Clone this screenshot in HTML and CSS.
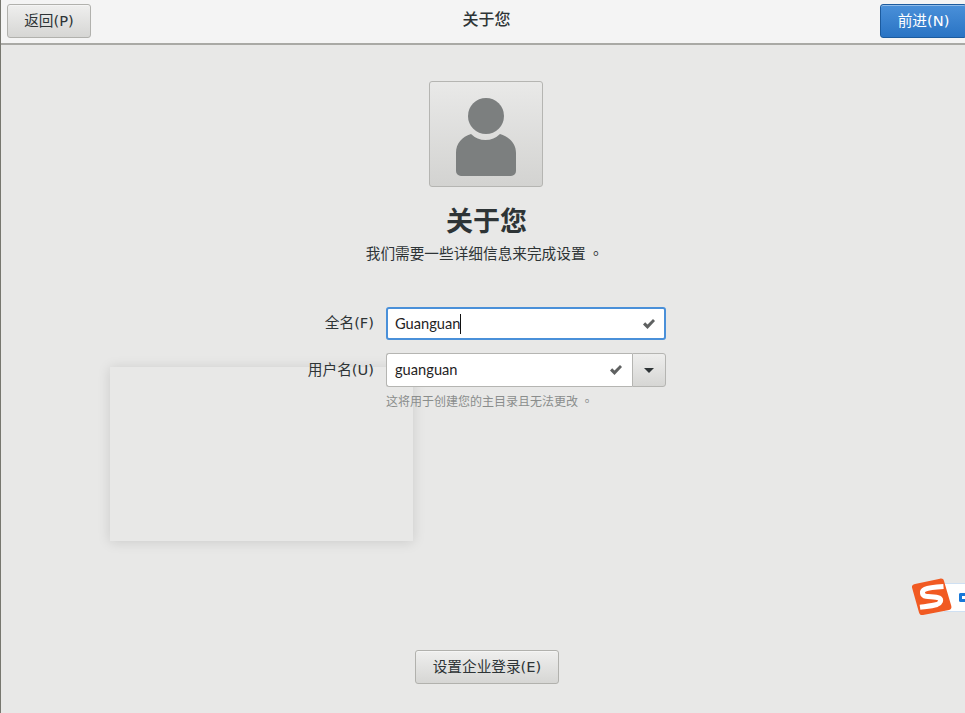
FILE: index.html
```html
<!DOCTYPE html>
<html lang="zh-CN">
<head>
<meta charset="utf-8">
<title>关于您</title>
<link rel="stylesheet" href="styles.css">
</head>
<body>
<div class="page">
  <header class="header">
    <button class="btn back">返回(P)</button>
    <div class="header-title">关于您</div>
    <button class="btn next">前进(N)</button>
  </header>
  <main class="main">
    <div class="ghost"></div>
    <div class="avatar">
      <svg width="112" height="104" viewBox="1 1 112 104">
        <circle cx="57" cy="35" r="18" fill="#7c7f7f"/>
        <path d="M27 72C27 62 33 56 42 53A20.5 20.5 0 0 0 71 53C80 56 87 62 87 72V90A5 5 0 0 1 82 95H32A5 5 0 0 1 27 90Z" fill="#7c7f7f"/>
      </svg>
    </div>
    <h1 class="title">关于您</h1>
    <p class="subtitle">我们需要一些详细信息来完成设置<span class="stop" lang="zh-TW">。</span></p>
    <div class="form">
      <label class="label">全名(F)</label>
      <div class="field focused">
        <span class="value">Guanguan</span><span class="caret"></span>
        <svg class="check" width="12" height="10" viewBox="0 0 12 10"><path d="M0 5.5 4.5 10 12 2 10 0 4.5 5.5 2.2 3.3Z" fill="#5f6161"/></svg>
      </div>
      <label class="label">用户名(U)</label>
      <div class="combo">
        <div class="field inner">
          <span class="value">guanguan</span>
          <svg class="check" width="12" height="10" viewBox="0 0 12 10"><path d="M0 5.5 4.5 10 12 2 10 0 4.5 5.5 2.2 3.3Z" fill="#5f6161"/></svg>
        </div>
        <div class="drop"><span class="arrow"></span></div>
      </div>
      <div class="spacer"></div>
      <p class="hint">这将用于创建您的主目录且无法更改<span class="stop" lang="zh-TW">。</span></p>
    </div>
    <div class="push"></div>
    <button class="btn enterprise">设置企业登录(E)</button>
  </main>
  <div class="sogou">
    <div class="sogou-bar"><span class="sogou-c"></span></div>
    <svg class="sogou-logo" width="44" height="42" viewBox="0 0 44 42">
      <path d="M5 8 30 2.7C32 2.3 33.5 3 34 5L41.3 30C41.8 32 41 33.5 39 34L13 39C11 39.4 9.5 38.5 9 36.5L2 11.5C1.5 9.5 3 8.4 5 8Z" fill="#f15a22"/>
      <path d="M33.5 10.5C26 11 19 11.5 15 13.3 11 15.2 12 19.5 16 20.3 20 21 26 20.5 29 22 32 23.8 30.5 27.3 27 28.5 22 30 15 30.5 10 31.2" fill="none" stroke="#fff" stroke-width="5"/>
    </svg>
  </div>
</div>
</body>
</html>
```
FILE: styles.css
```css
* { box-sizing: border-box; }
html, body { margin: 0; height: 100%; overflow: hidden; }
body {
  font-family: "DejaVu Sans", "Noto Sans CJK SC", sans-serif;
  font-size: 14.67px;
  color: #2e3436;
  background: #e8e8e7;
}
.page {
  position: relative;
  height: 713px;
  display: flex;
  flex-direction: column;
  border-left: 1px solid #77776f;
  overflow: hidden;
}
.header {
  height: 45px;
  flex: none;
  display: flex;
  align-items: flex-start;
  justify-content: space-between;
  padding: 4px 0 0 6px;
  background: #f4f4f4;
  border-bottom: 2px solid #a9a9a5;
  position: relative;
}
.header-title {
  position: absolute;
  left: 0;
  right: 0;
  top: 8px;
  text-align: center;
  font-size: 16px;
  font-weight: 500;
  line-height: 24px;
  pointer-events: none;
  padding-left: 7px;
}
.btn {
  font: inherit;
  color: #2e3436;
  height: 34px;
  padding: 0 0 3px;
  border: 1px solid #b1b1ad;
  border-radius: 3px;
  background: linear-gradient(#efefee, #d6d6d4);
  box-shadow: inset 0 1px 0 #fff6;
}
.back { width: 84px; }
.next {
  width: 87px;
  margin-right: -2px;
  color: #fff;
  border-color: #1c5b9e;
  background: linear-gradient(#4a90d9, #2a74c4);
}
.main {
  flex: 1;
  position: relative;
  display: flex;
  flex-direction: column;
  align-items: flex-start;
  padding-top: 36px;
  padding-bottom: 29px;
}
.ghost {
  position: absolute;
  left: 109px;
  top: 322px;
  width: 303px;
  height: 174px;
  background: #e8e8e7;
  box-shadow: 0 1px 12px rgba(0, 0, 0, .13);
}
.avatar {
  position: relative;
  margin-left: 428px;
  width: 114px;
  height: 106px;
  border: 1px solid #b5b5b2;
  border-radius: 3px;
  background: linear-gradient(#e9e9e8, #d3d3d1);
}
.avatar svg { display: block; }
.title {
  position: relative;
  align-self: center;
  margin: 16px 0 0;
  font-size: 27px;
  font-weight: 700;
  line-height: 38px;
  color: #2e3436;
  padding-left: 7px;
}
.subtitle {
  position: relative;
  align-self: center;
  margin: 1px 0 0;
  line-height: 22px;
  white-space: nowrap;
}
.stop {
  font-family: "Noto Sans CJK TC", sans-serif;
  margin-left: 3px;
  margin-right: -3px;
}
.form {
  position: relative;
  margin-top: 42px;
  display: grid;
  grid-template-columns: 373px 280px;
  column-gap: 12px;
  row-gap: 13px;
  align-items: center;
}
.label {
  text-align: right;
  line-height: 31px;
  height: 33px;
}
.field {
  height: 33px;
  display: flex;
  align-items: center;
  padding: 0 10px 0 8px;
  background: #fff;
  color: #1f2324;
  border: 1px solid #b5b5b2;
  border-radius: 3px;
}
.focused {
  border: 2px solid #4a90d9;
  padding: 0 9px 0 7px;
  height: 33px;
}
.value {
  font-family: Lato, sans-serif;
  line-height: 20px;
}
.caret {
  width: 1px;
  height: 20px;
  background: #111;
  margin-left: 0;
}
.check { margin-left: auto; }
.combo {
  display: flex;
  height: 34px;
}
.inner {
  flex: 1;
  height: 34px;
  border-radius: 3px 0 0 3px;
  border-right: 0;
}
.drop {
  width: 34px;
  display: flex;
  align-items: center;
  justify-content: center;
  border: 1px solid #b5b5b2;
  border-radius: 0 3px 3px 0;
  background: linear-gradient(#eeeeed, #d6d6d4);
}
.arrow {
  width: 0;
  height: 0;
  border-left: 5px solid transparent;
  border-right: 5px solid transparent;
  border-top: 5px solid #2e3436;
}
.spacer { height: 1px; }
.hint {
  margin: -8px 0 0;
  font-size: 12px;
  line-height: 18px;
  color: #8a8d8c;
  white-space: nowrap;
}
.push { flex: 1; }
.enterprise {
  position: relative;
  width: 144px;
  margin-left: 414px;
}
.sogou {
  position: absolute;
  left: 909px;
  top: 576px;
  width: 56px;
  height: 42px;
}
.sogou-logo { position: absolute; left: 0; top: 0; }
.sogou-bar {
  position: absolute;
  left: 34px;
  top: 7px;
  width: 30px;
  height: 29px;
  background: #fff;
  border: 1px solid #cfe0f2;
  display: flex;
  align-items: center;
}
.sogou-c {
  margin-left: 14px;
  width: 14px;
  height: 9px;
  border: 3px solid #1878d8;
  border-right: 0;
  border-radius: 2px 0 0 2px;
}
```
